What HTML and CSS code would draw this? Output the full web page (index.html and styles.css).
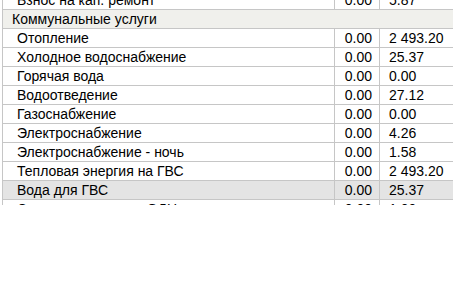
FILE: index.html
```html
<!DOCTYPE html>
<html lang="ru">
<head>
<meta charset="utf-8">
<title>Начисления</title>
<link rel="stylesheet" href="styles.css">
</head>
<body>
<div class="viewport">
  <table class="charges">
    <colgroup>
      <col class="c-name">
      <col class="c-num">
      <col class="c-sum">
    </colgroup>
    <tbody>
      <tr><td class="name">Взнос на кап. ремонт</td><td class="num">0.00</td><td class="sum">5.87</td></tr>
      <tr class="group"><td colspan="3">Коммунальные услуги</td></tr>
      <tr><td class="name">Отопление</td><td class="num">0.00</td><td class="sum">2 493.20</td></tr>
      <tr><td class="name">Холодное водоснабжение</td><td class="num">0.00</td><td class="sum">25.37</td></tr>
      <tr><td class="name">Горячая вода</td><td class="num">0.00</td><td class="sum">0.00</td></tr>
      <tr><td class="name">Водоотведение</td><td class="num">0.00</td><td class="sum">27.12</td></tr>
      <tr><td class="name">Газоснабжение</td><td class="num">0.00</td><td class="sum">0.00</td></tr>
      <tr><td class="name">Электроснабжение</td><td class="num">0.00</td><td class="sum">4.26</td></tr>
      <tr><td class="name">Электроснабжение - ночь</td><td class="num">0.00</td><td class="sum">1.58</td></tr>
      <tr><td class="name">Тепловая энергия на ГВС</td><td class="num">0.00</td><td class="sum">2 493.20</td></tr>
      <tr class="hover"><td class="name">Вода для ГВС</td><td class="num">0.00</td><td class="sum">25.37</td></tr>
      <tr><td class="name">Содержание жилья ОДН</td><td class="num">0.00</td><td class="sum">1.00</td></tr>
    </tbody>
  </table>
</div>
</body>
</html>
```
FILE: styles.css
```css
html, body {
  margin: 0;
  padding: 0;
  background: #ffffff;
}

.viewport {
  height: 205px;
  overflow: hidden;
}

.charges {
  border-collapse: collapse;
  table-layout: fixed;
  width: 460px;
  margin: -10px 0 0 2px;
  font-family: "Liberation Sans", Arial, sans-serif;
  font-size: 14px;
  line-height: 16px;
  color: #000000;
}

.c-name { width: 332px; }
.c-num { width: 45px; }
.c-sum { width: 83px; }

.charges td {
  border: 1px solid #c6c6c6;
  height: 18px;
  padding: 0;
  white-space: nowrap;
  vertical-align: middle;
}

.charges td.name {
  padding-left: 14px;
}

.charges td.num {
  text-align: right;
  padding-right: 7px;
}

.charges td.sum {
  padding-left: 9px;
}

.charges .group td {
  background: #f0f0ec;
  padding-left: 9px;
}

.charges .hover td {
  background: #e4e4e4;
}
```
